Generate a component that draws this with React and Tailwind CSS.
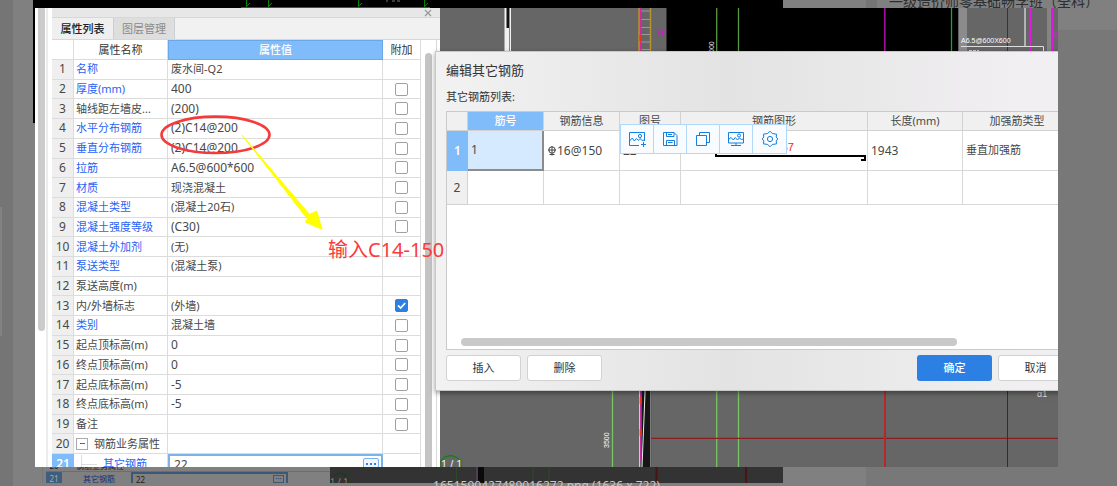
import React from "react";

const properties = [
  { name: "名称", value: "废水间-Q2", blue: true },
  { name: "厚度(mm)", value: "400", blue: true, box: true },
  { name: "轴线距左墙皮...", value: "(200)", box: true },
  { name: "水平分布钢筋", value: "(2)C14@200", blue: true, box: true },
  { name: "垂直分布钢筋", value: "(2)C14@200", blue: true, box: true },
  { name: "拉筋", value: "A6.5@600*600", blue: true, box: true },
  { name: "材质", value: "现浇混凝土", blue: true, box: true },
  { name: "混凝土类型", value: "(混凝土20石)", blue: true, box: true },
  { name: "混凝土强度等级", value: "(C30)", blue: true, box: true },
  { name: "混凝土外加剂", value: "(无)", blue: true },
  { name: "泵送类型", value: "(混凝土泵)", blue: true },
  { name: "泵送高度(m)", value: "" },
  { name: "内/外墙标志", value: "(外墙)", box: true, checked: true },
  { name: "类别", value: "混凝土墙", blue: true, box: true },
  { name: "起点顶标高(m)", value: "0", box: true },
  { name: "终点顶标高(m)", value: "0", box: true },
  { name: "起点底标高(m)", value: "-5", box: true },
  { name: "终点底标高(m)", value: "-5", box: true },
  { name: "备注", value: "", box: true },
];

const isLatin = (text) => /^[\x00-\x7f]*$/.test(text);

function Check({ label, checked }) {
  return (
    <span className="relative mx-auto block size-[13px]">
      <input
        type="checkbox"
        aria-label={label}
        defaultChecked={checked}
        className="peer block size-[13px] appearance-none rounded-[2px] border border-[#a0a0a0] bg-white checked:border-[#2c7fe3] checked:bg-[#2c7fe3]"
      />
      <svg viewBox="0 0 13 13" className="pointer-events-none absolute inset-0 hidden size-[13px] peer-checked:block" fill="none" stroke="#fff" strokeWidth="1.7">
        <path d="M3 6.4 5.6 9 10.2 4" />
      </svg>
    </span>
  );
}

function PropertyPanel() {
  const line = "border-r border-b border-[#dcdcdc] p-0";
  return (
    <section className="flex w-[405px] shrink-0 bg-white">
      <div className="flex w-[17px] shrink-0 justify-between pl-[3px]">
        <div className="h-[323px] w-[7px] rounded-b-full bg-[#cbcbcb]" />
        <div className="mr-1 w-[2px] bg-[#ececec]" />
      </div>
      <div className="flex min-w-0 flex-1 flex-col">
        <div className="flex h-[10px] shrink-0 items-center justify-end border-b border-[#d4d8da] bg-[#e7e7e7] pr-2">
          <button aria-label="关闭" className="block">
            <svg viewBox="0 0 8 8" className="size-2" stroke="#999" strokeWidth="1.3"><path d="M1 1 7 7M7 1 1 7" /></svg>
          </button>
        </div>
        <div className="flex h-[22px] shrink-0 border-b border-[#d4d8da] bg-[#f1f1f1] text-[11px] leading-[22px]" role="tablist">
          <button role="tab" aria-selected="true" className="w-[62px] border-r border-[#c8d0d4] bg-[#efefef] font-medium text-[#222]">属性列表</button>
          <button role="tab" aria-selected="false" className="w-[61px] border-r border-[#c8d0d4] bg-[#dedede] text-[#8b8b8b]">图层管理</button>
        </div>
        <div className="flex min-h-0 flex-1 overflow-hidden">
          <table className="h-[434px] w-[369px] shrink-0 table-fixed border-separate border-spacing-0 text-left text-[11px] leading-[18px] text-[#484848]">
            <colgroup>
              <col className="w-[22px]" />
              <col className="w-[94px]" />
              <col />
              <col className="w-[38px]" />
            </colgroup>
            <thead>
              <tr className="h-[19px] text-center text-[#333]">
                <th className={line} aria-label="序号" />
                <th className={line + " text-center font-normal"}>属性名称</th>
                <th className="border border-[#6aa7e8] bg-[#80bbfa] p-0 text-center font-medium text-white">属性值</th>
                <th className={line + " text-center font-normal"}>附加</th>
              </tr>
            </thead>
            <tbody>
              {properties.map((row, i) => (
                <tr key={row.name} className="h-[19px]">
                  <td className={line + " bg-[#efefef] text-center text-xs leading-[18px]"}>{i + 1}</td>
                  <td className={line + " whitespace-nowrap pl-[2px] " + (row.blue ? "text-[#2a62f5]" : "")}>{row.name}</td>
                  <td className={line + " whitespace-nowrap pl-[3px] " + (isLatin(row.value) ? "text-xs leading-[18px]" : "")}>{row.value}</td>
                  <td className={line}>{row.box && <Check label={row.name + " 附加"} checked={row.checked} />}</td>
                </tr>
              ))}
              <tr className="h-[19px]">
                <td className={line + " bg-[#efefef] text-center text-xs leading-[18px]"}>20</td>
                <td className={line}>
                  <span className="flex items-center gap-[6px] pl-[2px]">
                    <button aria-label="折叠" className="flex size-3 items-center justify-center border border-[#aaa] bg-white">
                      <span className="h-px w-[5px] bg-[#666]" />
                    </button>
                    钢筋业务属性
                  </span>
                </td>
                <td className={line} />
                <td className={line} />
              </tr>
              <tr className="h-[19px]">
                <td className="bg-[#80bbfa] p-0 text-center text-xs leading-[18px] font-semibold text-white">21</td>
                <td className="border-r border-[#dcdcdc] p-0">
                  <span className="flex items-center pl-[7px] text-[#2a62f5]">
                    <span className="h-[18px] w-px bg-[#ddd]" />
                    <span className="mr-[6px] h-px w-[15px] bg-[#ddd]" />
                    其它钢筋
                  </span>
                </td>
                <td className="border-2 border-[#7ab2ea] p-0">
                  <span className="flex items-center justify-between pr-[2px] pl-[4px] text-xs leading-[15px]">
                    22
                    <button aria-label="更多" className="flex h-[13px] w-4 items-center justify-center gap-[2px] rounded-[2px] border border-[#7ab2ea] bg-[#eef6ff]">
                      <span className="size-[2px] bg-[#2c7fe3]" />
                      <span className="size-[2px] bg-[#2c7fe3]" />
                      <span className="size-[2px] bg-[#2c7fe3]" />
                    </button>
                  </span>
                </td>
                <td className="border-r border-[#dcdcdc] p-0" />
              </tr>
            </tbody>
          </table>
          <div className="flex flex-1 gap-[4px] pl-[4px]">
            <div className="mt-[13px] w-[7px] rounded-t-full bg-[#c4c4c4]" />
            <div className="w-px bg-[#d8d8d8]" />
          </div>
        </div>
      </div>
    </section>
  );
}

const cad = "'Liberation Sans Narrow', 'Liberation Sans', sans-serif";

function Drawing() {
  return (
    <svg className="absolute inset-0 h-full w-full" aria-hidden="true">
      <g transform="translate(-440 -8)">
        <rect x="504.5" y="8" width="6.5" height="44" fill="#f0f0f0" />
        <rect x="506.5" y="8" width="2.5" height="20" fill="#111" />
        <rect x="509" y="8" width="1" height="44" fill="#888" />
        <path d="M641 11h9M641 19.500h9M641 27.500h9M641 34.500h9M641 42h9M641 49.500h9" stroke="#999" />
        <path d="M639 8v44M650.500 8v44" stroke="#b8942e" strokeWidth="1.500" />
        <path d="M640.700 8v44" stroke="#d02898" strokeWidth="1.400" />
        <path d="M640.500 35v6" stroke="#f03010" strokeWidth="2" />
        <path d="M658 31h3.500v4.500h-3.500zM662.500 31h3v4.500h-3zM658 33.200h7.500" stroke="#c81ec8" fill="none" />
        <rect x="666.500" y="8" width="292" height="45" fill="#000" />
        <path d="M716.700 8v44M738.500 8v44" stroke="#579842" strokeWidth="1.300" />
        <text x="714" y="53" transform="rotate(-90 714 53)" fontSize="7" fontFamily={cad} fill="#eee">000</text>
        <path d="M884.800 8v44" stroke="#a010a0" strokeWidth="1.600" />
        <path d="M951.500 8v44" stroke="#1ea81e" strokeWidth="1.300" />
        <rect x="958.500" y="8" width="8.500" height="44" fill="#8b8b8b" />
        <path d="M1007.500 8v44" stroke="#7c1717" />
        <path d="M1025 8v38" stroke="#ccc" strokeWidth="1.500" />
        <rect x="1047" y="8" width="4" height="44" fill="#858585" />
        <path d="M1030.300 8v44M1052.500 8v44" stroke="#e01ce0" strokeWidth="1.500" />
        <path d="M1027 35h3M1052 35h4M1056 32v5" stroke="#e01ce0" />
        <path d="M961 46.500h82.500v6" stroke="#ddd" fill="none" />
        <path d="M969 50.500h10" stroke="#ccc" strokeDasharray="3 1" />
        <text x="961" y="43" fontSize="7" fontFamily={cad} fill="#fff">A6.5@600X600</text>

        <path d="M612.500 391v76M716.700 391v76M738.500 391v76" stroke="#79c463" strokeWidth="1.300" />
        <path d="M641.500 391h10v76h-10z" fill="#161616" />
        <path d="M645 391v2l-3 74" stroke="#eee" fill="none" />
        <path d="M650.800 391v76" stroke="#aaa" />
        <path d="M639.500 391v76" stroke="#ccc" />
        <path d="M640.800 391v70" stroke="#c828a8" strokeWidth="1.400" />
        <path d="M640.700 397v7M640.700 429v7" stroke="#f03020" strokeWidth="2" />
        <path d="M651 438.300h1600" stroke="#891f22" strokeWidth="1.300" />
        <path d="M885 391v76" stroke="#b4282c" strokeWidth="2" />
        <path d="M1007.500 391v76" stroke="#751214" />
        <text x="609" y="448" transform="rotate(-90 609 448)" fontSize="7" fontFamily={cad} fill="#fff">3500</text>
        <text x="1037" y="397" fontSize="9" fontFamily={cad} fill="#ddd">α1</text>
        <path d="M1034 401.500h400" stroke="#c81ec8" />
        <path d="M440 468v-6l5-5 6-1.500 6 2 4 3.500v7" fill="none" stroke="#1f7a1f" strokeWidth="1.400" />
        <text x="441" y="468" fontSize="11" fontFamily="'Liberation Sans', sans-serif" fill="#eee">1 / 1</text>
      </g>
    </svg>
  );
}

const stroke = { fill: "none", stroke: "#147fe0", strokeWidth: 1, viewBox: "0 0 18 18" };

const tools = [
  {
    label: "添加图片",
    icon: (
      <svg {...stroke} className="size-[18px]">
        <path d="M11 15.500H1.500v-13h15v8.500M1.500 11l2.700-3 2.200 3 2-2.500 2 2 1.600-2 2.200 2 2.300-.5" />
        <circle cx="12" cy="6" r="1.600" />
        <path d="M13 14.500h5M15.500 12v5" />
      </svg>
    ),
  },
  {
    label: "保存",
    icon: (
      <svg {...stroke} className="size-[18px]">
        <path d="M2.500 2.500h10.500l3 3v10H2.500zM5.500 2.500v4h7.500v-4M5.500 15.500v-5h8v5M7 12.500h4.500M7 4.500h4" />
      </svg>
    ),
  },
  {
    label: "复制",
    icon: (
      <svg {...stroke} className="size-[18px]">
        <path d="M2.500 5.500h10v10h-10zM5.500 5.500V2.500h10v10h-3" />
      </svg>
    ),
  },
  {
    label: "投屏",
    icon: (
      <svg {...stroke} className="size-[18px]">
        <path d="M1.500 2.500h15v10.500h-15zM9 13v2.500M4 15.500h10M1.500 9.500l2.600-2 2.200 2.500 2-2.500 2.200 2.500 1.800-2 2.200 1.500 2-.5" />
        <circle cx="12" cy="5.500" r="1.500" />
      </svg>
    ),
  },
  {
    label: "设置",
    icon: (
      <svg {...stroke} className="size-[18px]">
        <path d="M9 1.200 11.300 3.500 15.600 4.200 15.200 7 16.800 9 15.200 11 15.600 13.800 11.300 14.500 9 16.800 6.700 14.500 2.400 13.800 2.800 11 1.200 9 2.800 7 2.400 4.200 6.700 3.500Z" strokeLinejoin="round" />
        <circle cx="9" cy="9" r="2.600" />
      </svg>
    ),
  },
];

function RebarDialog() {
  const head = "border-r border-b border-[#d2d2d2] bg-[#f0f0f0] p-0 text-center font-normal";
  const cell = "border-r border-b border-[#d8d8d8] p-0 pl-[3px]";
  const button = "h-[26px] w-[75px] rounded-[3px] border border-[#d2d2d2] bg-white text-[11px] text-[#333]";
  return (
    <section
      role="dialog"
      aria-label="编辑其它钢筋"
      className="absolute top-[43px] -right-[26px] -left-[5px] flex h-[340px] flex-col border border-[#c8c8c8] bg-linear-to-r from-[#f2f2f2] from-0% via-[#e3e3e3] via-45% to-[#f1eff1] to-90% px-[10px] shadow-[0_2px_5px_rgba(0,0,0,0.4)]"
    >
      <h2 className="mt-[7px] text-[13px] leading-[22px] text-[#333]">编辑其它钢筋</h2>
      <p className="mt-[7px] text-[11px] leading-[18px] text-[#333]">其它钢筋列表:</p>
      <div className="mt-[5px] flex h-[239px] flex-col border border-[#cacaca] bg-white">
        <table className="w-full table-fixed border-separate border-spacing-0 text-left text-xs text-[#484848]">
          <colgroup>
            <col className="w-[21px]" />
            <col className="w-[76px]" />
            <col className="w-[76px]" />
            <col className="w-[61px]" />
            <col />
            <col className="w-[95px]" />
            <col className="w-[109px]" />
          </colgroup>
          <thead>
            <tr className="h-[19px] text-[11px] leading-[18px]">
              <th className={head} aria-label="序号" />
              <th className="border-r border-b border-[#d2d2d2] bg-[#80bbfa] p-0 text-center font-medium text-white">筋号</th>
              <th className={head}>钢筋信息</th>
              <th className={head}>图号</th>
              <th className={head}>钢筋图形</th>
              <th className={head}>长度(mm)</th>
              <th className={head}>加强筋类型</th>
            </tr>
          </thead>
          <tbody>
            <tr className="h-[40px]">
              <td className="bg-[#80bbfa] p-0 text-center font-semibold text-white">1</td>
              <td className="border-r-2 border-b-2 border-[#8c8c8c] bg-[#d6eaff] p-0 pl-[3px]">1</td>
              <td className={cell}>
                <span className="flex items-center">
                  <svg viewBox="0 0 10 10" className="size-[10px]" fill="none" stroke="#444">
                    <circle cx="5" cy="4" r="3.200" />
                    <path d="M5 0v9.500M1 4h8M2.500 8.500h5" />
                  </svg>
                  16@150
                </span>
              </td>
              <td className={cell}>22</td>
              <td className="border-r border-b border-[#d8d8d8] p-0">
                <svg className="ml-auto block h-[38px] w-[152px]" fill="none">
                  <path d="M1 18v6H150v4h-4" stroke="#000" strokeWidth="2" />
                  <text x="79" y="19" textAnchor="end" fontSize="11" fontFamily={cad} fill="#f01c1c">1867</text>
                </svg>
              </td>
              <td className={cell}>1943</td>
              <td className={cell + " text-[11px]"}>垂直加强筋</td>
            </tr>
            <tr className="h-[34px]">
              <td className={head + " text-center"}>2</td>
              <td className={cell} />
              <td className={cell} />
              <td className={cell} />
              <td className={cell} />
              <td className={cell} />
              <td className={cell} />
            </tr>
          </tbody>
        </table>
        <div className="mt-auto mr-[115px] mb-[3px] ml-[14px] h-[8px] rounded-full bg-[#c9c9c9]" />
      </div>
      <div className="mt-[5px] flex gap-[6px]">
        <button className={button}>插入</button>
        <button className={button}>删除</button>
        <button className="ml-auto h-[26px] w-[75px] rounded-[3px] bg-[#2c7fe3] text-[11px] font-medium text-white">确定</button>
        <button className={button}>取消</button>
      </div>
      <div role="toolbar" className="absolute top-[72px] left-[184px] flex h-[30px] divide-x divide-[#b3d8f7] border border-[#b3d8f7] bg-[#f8fbff]">
        {tools.map((tool) => (
          <button key={tool.label} aria-label={tool.label} className="flex w-[33px] items-center justify-center">
            {tool.icon}
          </button>
        ))}
      </div>
    </section>
  );
}

function Annotations() {
  return (
    <>
      <svg className="pointer-events-none absolute inset-0 h-full w-full" aria-hidden="true">
        <g transform="translate(-35 -8)">
          <ellipse cx="215.500" cy="134.800" rx="54" ry="18.200" fill="none" stroke="#f63a3c" strokeWidth="2.600" />
          <path d="M242 135 309.500 214.500 316.700 211 322 229.300 305.300 222 307.500 219Z" fill="#ffff00" stroke="#ffff00" strokeWidth="1" />
        </g>
      </svg>
      <p className="absolute top-[227px] left-[293px] text-[20px] leading-[30px] whitespace-nowrap text-[#fb3a3c]">输入C14-150</p>
    </>
  );
}

export default function App() {
  return (
    <div className="flex h-screen flex-col overflow-hidden bg-[#787878] font-['Noto_Sans','Noto_Sans_CJK_SC',sans-serif]">
      <header className="flex h-2 shrink-0 overflow-hidden">
        <div className="w-[13px] bg-[#757575]" />
        <div className="w-5 bg-[#808080]" />
        <div className="flex-1 bg-black">
          <svg className="block h-2 w-full" fill="none" stroke="#0a7d0a">
            <path d="M208 7.500H397M213.500 0v8M235.500 0v8M325.500 0v8M391.500 0v8M213 7l4-4M235 7l4-4M325 7l4-4M391 7l4-4" />
            <path d="M353 1h2M359 1h3M364 1h3" stroke="#777" />
          </svg>
        </div>
        <div className="w-[83px] bg-[#808080]" />
        <div className="w-[11px] bg-[#757575]" />
        <div className="flex w-[240px] items-end bg-[#808080] pl-3 text-[14px] leading-[12px] whitespace-nowrap text-[#2e2e2e]">一级造价师零基础畅学班（全科）</div>
      </header>

      <div className="flex min-h-0 flex-1">
        <aside className="flex w-[35px] shrink-0">
          <div className="w-[13px] bg-[#757575] pt-[199px]">
            <div className="h-[129px] w-[2px] bg-[#828282]" />
          </div>
          <div className="flex flex-1 justify-end bg-[#808080]">
            <div className="h-[115px] w-[2px] bg-black" />
          </div>
        </aside>
        <main className="relative flex min-w-0 flex-1 overflow-hidden">
          <PropertyPanel />
          <div className="relative flex-1 bg-[#666]">
            <Drawing />
            <RebarDialog />
          </div>
          <Annotations />
        </main>
        <aside className="w-[59px] shrink-0">
          <div className="h-[22px] bg-[#808080]" />
        </aside>
      </div>

      <footer className="relative flex h-[19px] shrink-0 overflow-hidden">
        <div className="w-[13px] bg-[#757575]" />
        <div className="flex flex-1 flex-col bg-[#808080]">
          <div className="flex h-4 pl-[29px] text-[8px]">
            <div className="flex w-[288px] flex-col border-l border-[#777] pl-[3px]">
              <div className="flex h-[5px] items-end overflow-hidden border-b border-[#6d6d6d] leading-[10px] text-[#222]">
                <span className="w-[16px] text-center">20</span>
                <span className="pl-[14px]">钢筋业务属性</span>
              </div>
              <div className="flex h-[11px] overflow-hidden leading-[13px]">
                <span className="w-[16px] bg-[#3f5d7d] text-center text-[#aaa]">21</span>
                <span className="w-[69px] pl-[21px] text-[#15307c]">其它钢筋</span>
                <span className="flex w-[157px] justify-between border-2 border-b-0 border-[#3c5875] pr-[2px] pl-[3px] leading-[11px] text-[#222]">
                  22
                  <span className="mt-px w-[11px] border border-[#3c5875] text-center leading-[5px] text-[#15407c]">···</span>
                </span>
              </div>
            </div>
            <div className="flex-1 bg-[#333]">
              <svg className="block h-4 w-full" fill="none">
                <g transform="translate(-330 -467)">
                  <path d="M331 484v-5l4-4 5-2 5 2 3 4v5" stroke="#123c12" />
                  <text x="330" y="485" fontSize="9" fill="#888">1 / 1</text>
                  <path d="M456.500 467v16M533 467v16M549 467v16" stroke="#2d4a28" />
                  <path d="M477 467v16" stroke="#774477" />
                  <path d="M478 467h6v16h-6z" fill="#0a0a0a" />
                  <path d="M656.500 467v16M746 467v16" stroke="#4a1414" strokeWidth="2" />
                </g>
              </svg>
            </div>
          </div>
        </div>
        <div className="w-[83px] bg-[#808080]" />
        <div className="w-[251px] bg-[#787878]" />
        <p className="absolute top-[11px] right-0 left-0 pr-6 text-center text-[12px] leading-[16px] text-[#c8c8c8]">1651590427489016272.png (1636 x 722)</p>
      </footer>
    </div>
  );
}
